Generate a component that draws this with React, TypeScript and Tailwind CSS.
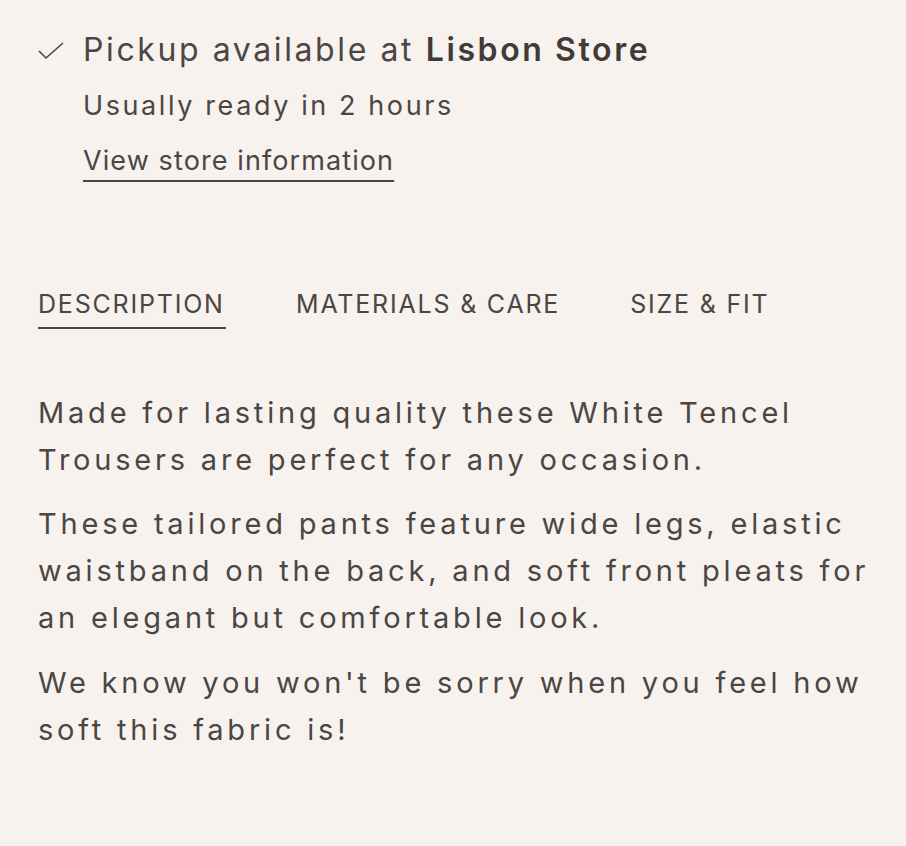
import React from "react";

export default function App() {
  const font = "[font-family:Inter,'Liberation_Sans',sans-serif]";
  return (
    <div className={`min-h-[846px] w-[906px] bg-[#f7f2ee] text-[#4a4644] ${font}`}>
      <div className="pl-[38px] pt-[30px]">
        <div className="flex items-start">
          <div className="w-[45px] h-[40px] flex items-center">
            <svg width="26" height="20" viewBox="0 0 26 20" className="mt-[1px]">
              <polyline points="1,10 8,17 25,2" fill="none" stroke="#4a4644" strokeWidth="1.6" />
            </svg>
          </div>
          <div>
            <p className="text-[32px] leading-[40px] tracking-[2.6px]">
              Pickup available at <span className="font-semibold text-[#3f3b39]">Lisbon Store</span>
            </p>
            <p className="mt-[19px] text-[27px] leading-[34px] tracking-[2.6px]">Usually ready in 2 hours</p>
            <p className="mt-[21px] text-[27px] leading-[34px] tracking-[1.1px]">
              <a className="underline decoration-[2px] underline-offset-[10px]">View store information</a>
            </p>
          </div>
        </div>

        <div className="mt-[109px] flex gap-[70px] text-[25px] leading-[34px] tracking-[1.8px]">
          <div className="flex flex-col">
            <span>DESCRIPTION</span>
            <span className="mt-[6px] h-[2px] bg-[#4a4644] w-[188px]" />
          </div>
          <span>MATERIALS &amp; CARE</span>
          <span>SIZE &amp; FIT</span>
        </div>

        <div className="mt-[60px] text-[29px] leading-[47px] tracking-[3.8px]">
          <p>
            Made for lasting quality these White Tencel
            <br />
            Trousers are perfect for any occasion.
          </p>
          <p className="mt-[17px]">
            These tailored pants feature wide legs, elastic
            <br />
            waistband on the back, and soft front pleats for
            <br />
            an elegant but comfortable look.
          </p>
          <p className="mt-[18px]">
            We know you won't be sorry when you feel how
            <br />
            soft this fabric is!
          </p>
        </div>
      </div>
    </div>
  );
}
